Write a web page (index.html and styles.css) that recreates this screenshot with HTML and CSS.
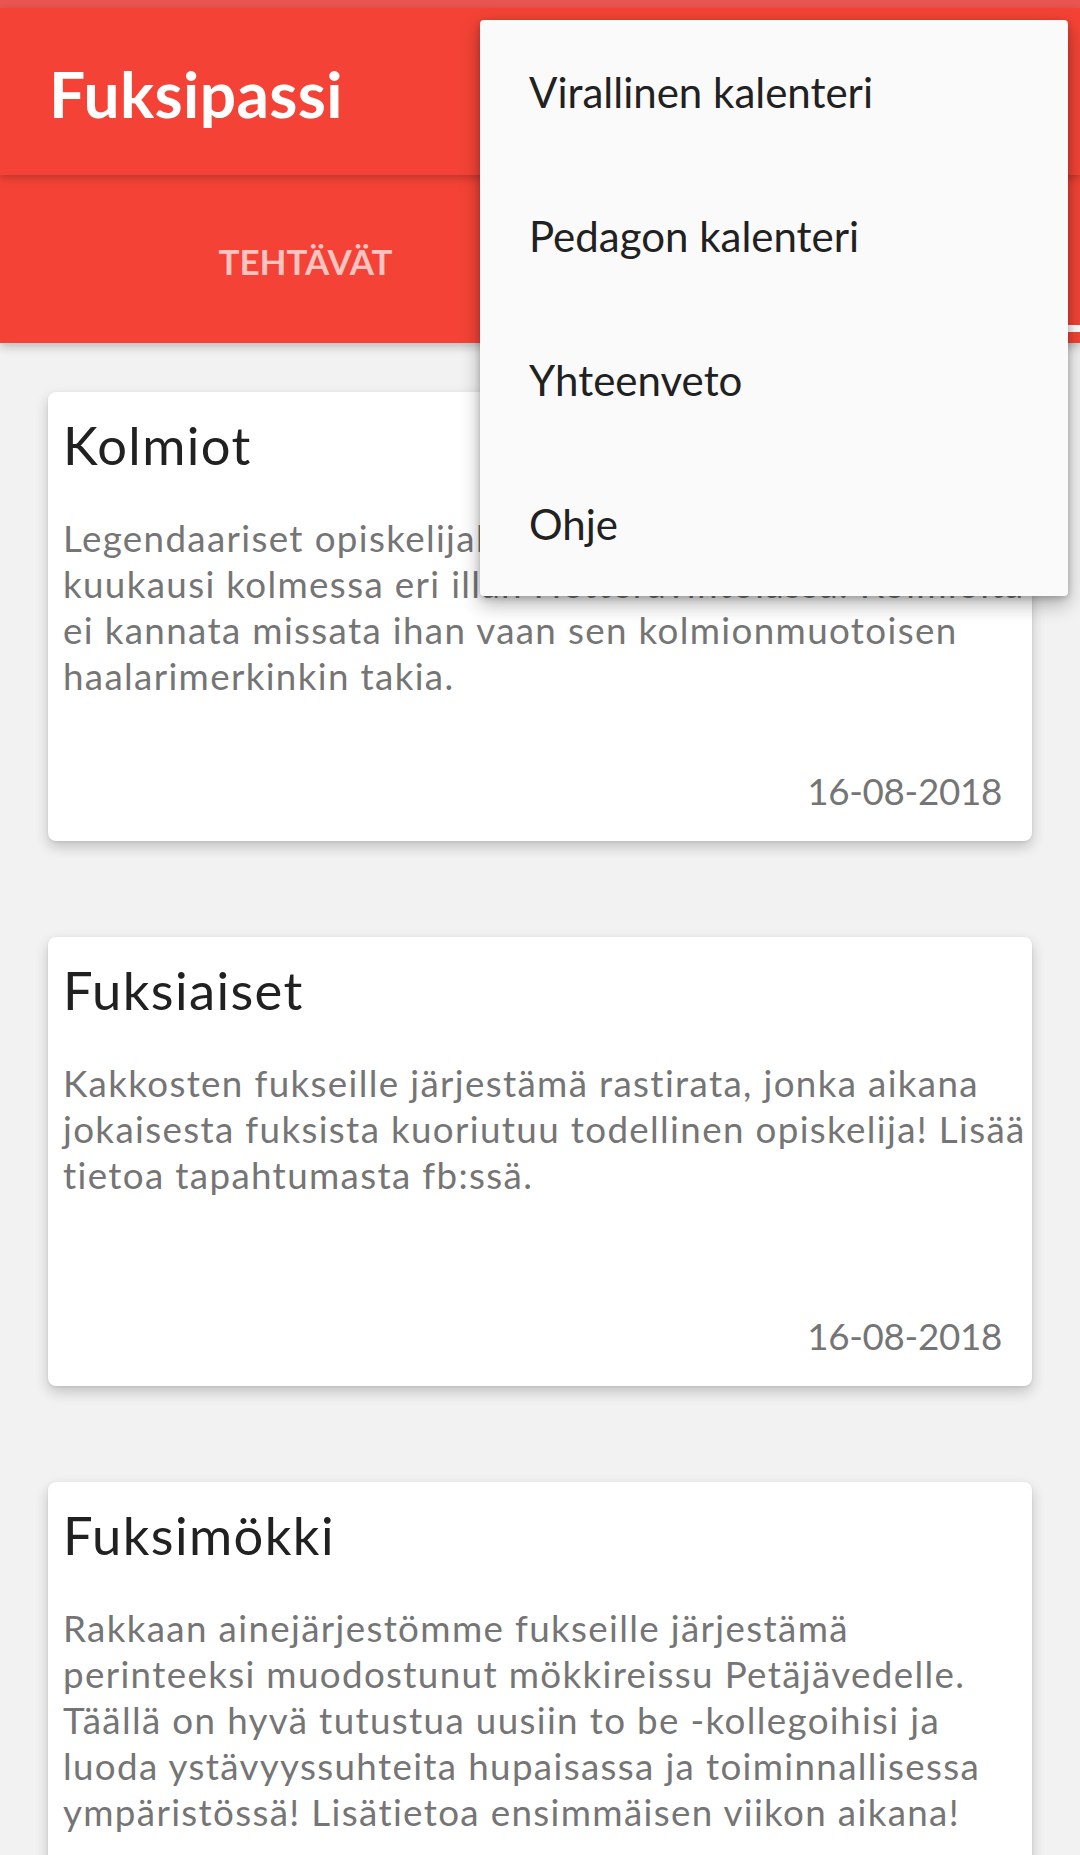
FILE: index.html
```html
<!DOCTYPE html>
<html lang="fi">
<head>
<meta charset="utf-8">
<title>Fuksipassi</title>
<link rel="stylesheet" href="styles.css">
</head>
<body>
<div class="status"></div>
<header class="appbar">
  <h1 class="app-title">Fuksipassi</h1>
</header>
<nav class="tabs">
  <div class="tab">TEHTÄVÄT</div>
  <div class="tab tab-active">TAPAHTUMAT</div>
</nav>
<main class="list">
  <article class="card">
    <h2 class="card-title">Kolmiot</h2>
    <p class="card-desc">Legendaariset opiskelijabileet järjestetään joka kuukausi kolmessa eri illan Hetteravintolassa. Kolmioita ei kannata missata ihan vaan sen kolmionmuotoisen haalarimerkinkin takia.</p>
    <div class="card-date">16-08-2018</div>
  </article>
  <article class="card">
    <h2 class="card-title">Fuksiaiset</h2>
    <p class="card-desc">Kakkosten fukseille järjestämä rastirata, jonka aikana jokaisesta fuksista kuoriutuu todellinen opiskelija! Lisää tietoa tapahtumasta fb:ssä.</p>
    <div class="card-date">16-08-2018</div>
  </article>
  <article class="card">
    <h2 class="card-title">Fuksimökki</h2>
    <p class="card-desc">Rakkaan ainejärjestömme fukseille järjestämä perinteeksi muodostunut mökkireissu Petäjävedelle. Täällä on hyvä tutustua uusiin to be -kollegoihisi ja luoda ystävyyssuhteita hupaisassa ja toiminnallisessa ympäristössä! Lisätietoa ensimmäisen viikon aikana!</p>
    <div class="card-date">16-08-2018</div>
  </article>
</main>
<div class="menu">
  <div class="menu-item">Virallinen kalenteri</div>
  <div class="menu-item">Pedagon kalenteri</div>
  <div class="menu-item">Yhteenveto</div>
  <div class="menu-item">Ohje</div>
</div>
</body>
</html>
```
FILE: styles.css
```css
html, body {
  margin: 0;
  padding: 0;
}
body {
  background: #f2f2f2;
  font-family: Lato, "Open Sans", sans-serif;
  height: 1855px;
  overflow: hidden;
  position: relative;
}
.status {
  height: 8px;
  background: #ea5551;
}
.appbar {
  position: relative;
  z-index: 3;
  height: 167px;
  box-sizing: border-box;
  padding: 48px 0 0 49px;
  background: #f44336;
  box-shadow: 0 3px 8px rgba(0, 0, 0, 0.22);
}
.app-title {
  margin: 0;
  font-size: 64px;
  line-height: 1.2;
  font-weight: 700;
  color: #ffffff;
  letter-spacing: 0.4px;
}
.tabs {
  position: relative;
  z-index: 2;
  display: flex;
  height: 168px;
  background: #f44336;
  box-shadow: 0 4px 9px rgba(0, 0, 0, 0.22);
}
.tab {
  width: 611px;
  display: flex;
  align-items: center;
  justify-content: center;
  box-sizing: border-box;
  padding-top: 4px;
  font-size: 35px;
  font-weight: 700;
  color: rgba(255, 255, 255, 0.7);
}
.tab-active {
  flex: 1;
  position: relative;
  color: #ffffff;
}
.tab-active::after {
  content: "";
  position: absolute;
  left: 0;
  right: 0;
  bottom: 11px;
  height: 7px;
  background: #ffffff;
}
.list {
  display: flex;
  flex-direction: column;
  gap: 96px;
  padding: 49px 48px 0;
}
.card {
  height: 449px;
  box-sizing: border-box;
  display: flex;
  flex-direction: column;
  padding: 21px 0 27px 15px;
  background: #ffffff;
  border-radius: 8px;
  box-shadow: 0 6px 14px rgba(0, 0, 0, 0.2), 0 1px 3px rgba(0, 0, 0, 0.08);
}
.card-title {
  margin: 0;
  font-size: 52.5px;
  line-height: 64px;
  font-weight: 400;
  color: #212121;
  letter-spacing: 1.4px;
}
.card-desc {
  margin: 38px 0 0;
  font-size: 36.75px;
  line-height: 46px;
  color: #757575;
  letter-spacing: 1.35px;
}
.card-date {
  margin-top: auto;
  margin-right: 30px;
  align-self: flex-end;
  font-size: 36.75px;
  line-height: 46px;
  color: #757575;
  letter-spacing: -0.3px;
}
.menu {
  position: absolute;
  z-index: 10;
  top: 20px;
  left: 480px;
  width: 588px;
  background: #fafafa;
  border-radius: 4px;
  box-shadow: 0 8px 20px rgba(0, 0, 0, 0.3), 0 2px 6px rgba(0, 0, 0, 0.2);
}
.menu-item {
  height: 144px;
  display: flex;
  align-items: center;
  padding-left: 49px;
  font-size: 42px;
  color: #212121;
}
```
